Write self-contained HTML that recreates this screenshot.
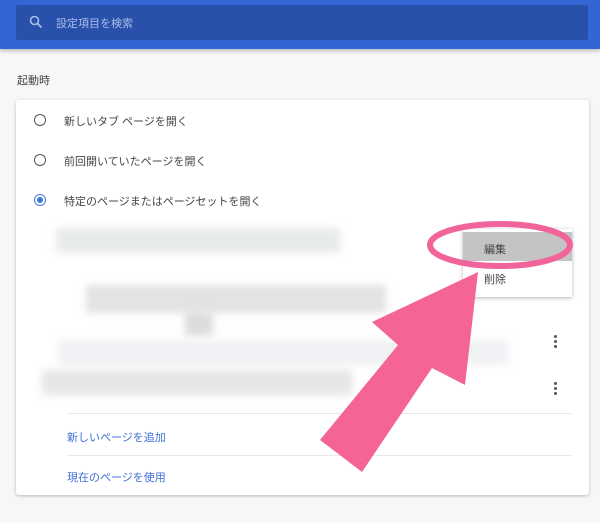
<html><head><style>
body{margin:0;width:600px;height:523px;background:#f6f7f9;font-family:"Liberation Sans","Noto Sans CJK JP",sans-serif;position:relative;overflow:hidden;font-size:11px;color:#444}
.hdr{position:absolute;left:0;top:0;width:600px;height:49px;background:#3466d3;box-shadow:0 2px 4px rgba(0,0,0,.25)}
.sb{position:absolute;left:16px;top:5px;width:572px;height:35px;background:#2950aa;border-radius:2px}
.sb span{position:absolute;left:40px;top:10px;color:#a9bde8;font-size:11px}
.t{position:absolute}
.card{position:absolute;left:16px;top:100px;width:573px;height:395px;background:#fff;border-radius:3px;box-shadow:0 1px 3px rgba(0,0,0,.25)}
.r{position:absolute;left:34px;width:10px;height:10px;border:1.5px solid #555;border-radius:50%}
.blur{position:absolute;background:#e4e4e4;filter:blur(4px)}
.lnk{position:absolute;left:67px;color:#3f6fd6;font-size:11px}
.hr{position:absolute;left:67px;width:505px;height:1px;background:#e8e8e8}
.dots{position:absolute;left:554px;width:3px}
.dots i{display:block;width:3px;height:3px;background:#555;border-radius:50%;margin-bottom:2px}
</style></head><body>
<div class="hdr"><div class="sb"><svg style="position:absolute;left:13px;top:10px" width="14" height="14" viewBox="0 0 14 14"><circle cx="5.5" cy="5.5" r="4" fill="none" stroke="#a9bde8" stroke-width="1.6"/><path d="M8.5 8.5L12.5 12.5" stroke="#a9bde8" stroke-width="1.8"/></svg><span>設定項目を検索</span></div></div>
<div class="t" style="left:17px;top:72px;font-size:11px">起動時</div>
<div class="card"></div>
<div class="r" style="top:114px"></div><div class="t" style="left:64px;top:113px">新しいタブ ページを開く</div>
<div class="r" style="top:154px"></div><div class="t" style="left:64px;top:153px">前回開いていたページを開く</div>
<div class="r" style="top:194px;border-color:#3c78d8"><div style="position:absolute;left:2px;top:2px;width:6px;height:6px;border-radius:50%;background:#3c78d8"></div></div><div class="t" style="left:64px;top:193px">特定のページまたはページセットを開く</div>
<div class="blur" style="left:56px;top:228px;width:285px;height:25px;background:#e8ece9"></div>
<div class="blur" style="left:86px;top:285px;width:300px;height:28px;background:#e3e3e3"></div>
<div class="blur" style="left:185px;top:312px;width:28px;height:24px;background:#dcdcdc"></div>
<div class="blur" style="left:58px;top:340px;width:450px;height:25px;background:#f0f1f4"></div>
<div class="blur" style="left:42px;top:370px;width:310px;height:25px;background:#e6e6e6"></div>
<div class="dots" style="top:335px"><i></i><i></i><i></i></div>
<div class="dots" style="top:382px"><i></i><i></i><i></i></div>
<div class="hr" style="top:413px"></div>
<div class="lnk" style="top:429px">新しいページを追加</div>
<div class="hr" style="top:455px"></div>
<div class="lnk" style="top:469px">現在のページを使用</div>
<div style="position:absolute;left:463px;top:229px;width:109px;height:68px;background:#fff;box-shadow:0 1px 4px rgba(0,0,0,.3)"><div style="position:absolute;left:0;top:3px;width:109px;height:29px;background:#c4c4c4"></div><div class="t" style="left:21px;top:12px">編集</div><div class="t" style="left:21px;top:42px">削除</div></div>
<svg style="position:absolute;left:0;top:0" width="600" height="523"><ellipse cx="500" cy="245" rx="70" ry="21" fill="none" stroke="#f0649a" stroke-width="6"/><polygon points="478,272 465,385 432,368 362,472 320,440 398,345 372,322" fill="#f56593"/></svg>
</body></html>
